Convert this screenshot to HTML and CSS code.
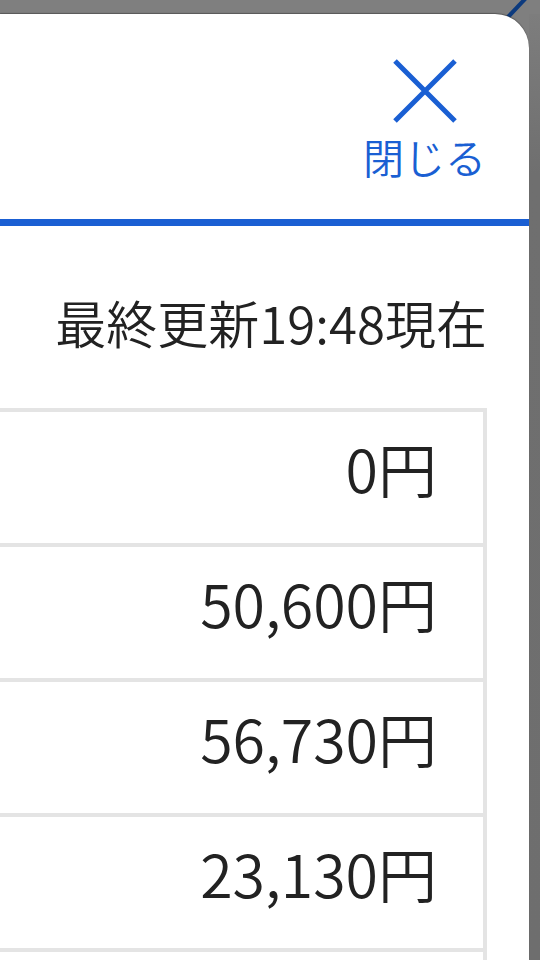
FILE: index.html
```html
<!DOCTYPE html>
<html lang="ja">
<head>
<meta charset="utf-8">
<title>料金</title>
<link rel="stylesheet" href="styles.css">
</head>
<body>
<div class="screen">
  <svg class="bg-stroke" width="40" height="20" viewBox="0 0 40 20"><line x1="18" y1="17" x2="36" y2="-2" stroke="#0c3a7e" stroke-width="4"/></svg>
  <div class="panel">
    <div class="head">
      <button class="close">
        <svg class="close-icon" width="64" height="64" viewBox="0 0 64 64"><path d="M2 2 L62 62 M62 2 L2 62" stroke="#1a5fd3" stroke-width="5" fill="none"/></svg>
        <span class="close-label">閉じる</span>
      </button>
    </div>
    <div class="rule"></div>
    <div class="body">
      <p class="updated">最終更新19:48現在</p>
      <div class="table">
        <div class="row"><span class="amount">0円</span></div>
        <div class="row"><span class="amount">50,600円</span></div>
        <div class="row"><span class="amount">56,730円</span></div>
        <div class="row"><span class="amount">23,130円</span></div>
        <div class="row"><span class="amount"></span></div>
      </div>
    </div>
  </div>
  <div class="side"></div>
</div>
</body>
</html>
```
FILE: styles.css
```css
html, body {
  margin: 0;
  padding: 0;
}
body {
  width: 540px;
  height: 960px;
  overflow: hidden;
  background: #7f7f7f;
  font-family: "Noto Sans CJK JP", "Noto Sans", sans-serif;
  color: #222;
}
.screen {
  position: relative;
  display: flex;
  align-items: flex-start;
  padding-top: 14px;
  height: 946px;
}
.bg-stroke {
  position: absolute;
  top: 0;
  right: 10px;
}
.panel {
  position: relative;
  width: 529px;
  height: 946px;
  flex: none;
  background: #fff;
  border-top-right-radius: 34px;
  box-shadow: 0 -1px 1px rgba(40, 40, 40, 0.45);
  overflow: hidden;
}
.side {
  flex: 1;
  align-self: stretch;
  background: linear-gradient(#7d7d7d 0, #6f6f6f 160px, #6e6e6e 100%);
}
.head {
  height: 205px;
  display: flex;
  justify-content: flex-end;
  padding-right: 43px;
  box-sizing: border-box;
}
.close {
  display: flex;
  flex-direction: column;
  align-items: center;
  border: 0;
  background: none;
  padding: 0;
  margin-top: 45px;
  font-family: inherit;
  cursor: pointer;
}
.close-icon {
  display: block;
}
.close-label {
  display: block;
  margin-top: 9px;
  font-size: 41px;
  line-height: 48px;
  font-weight: 350;
  color: #1a5fd3;
}
.rule {
  height: 7px;
  background: #1a5fd3;
}
.body {
  padding-right: 42px;
}
.updated {
  margin: 0;
  padding-top: 66px;
  height: 182px;
  box-sizing: border-box;
  text-align: right;
  font-size: 51px;
  line-height: 60px;
  font-weight: 350;
  color: #222;
}
.table {
  border-right: 4px solid #e4e4e4;
}
.row {
  height: 135px;
  box-sizing: border-box;
  border-top: 4px solid #e4e4e4;
  display: flex;
  align-items: center;
  justify-content: flex-end;
  padding-right: 46px;
  padding-bottom: 20px;
}
.amount {
  font-size: 59px;
  line-height: 1;
  font-weight: 350;
  color: #222;
}
```
